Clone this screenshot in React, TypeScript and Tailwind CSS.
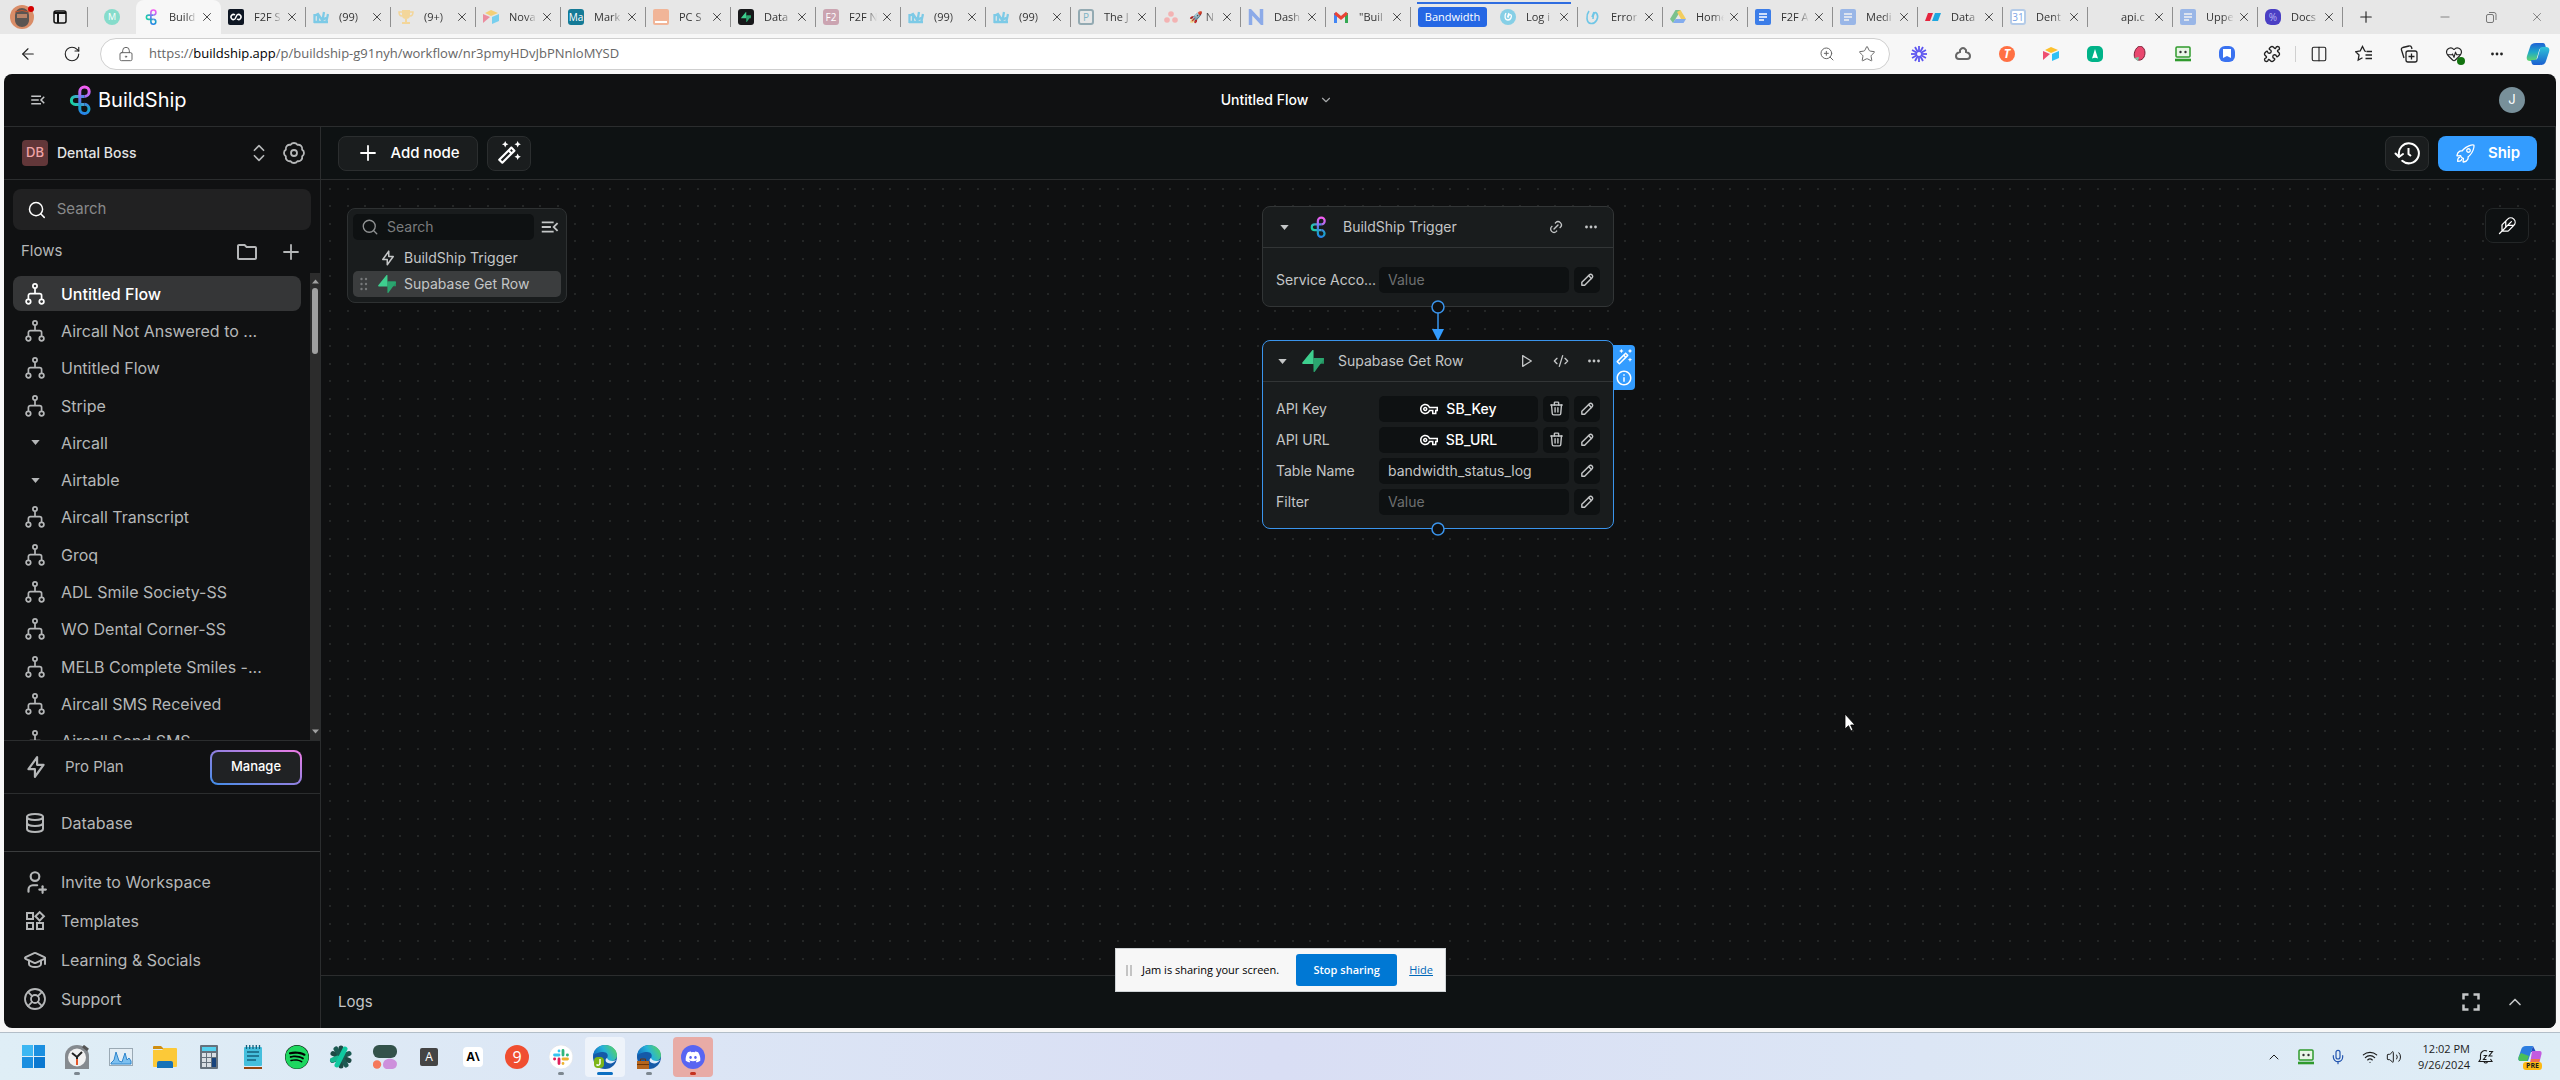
import type { ReactNode } from "react";
import {
  ArrowLeft,
  Badge,
  ChevronDown,
  ChevronsUpDown,
  ChevronUp,
  CodeXml,
  Columns2,
  GraduationCap,
  HeartPulse,
  LifeBuoy,
  LockKeyhole,
  Mic,
  Minus,
  Plus,
  Puzzle,
  RotateCw,
  Search,
  Star,
  Volume2,
  Wifi,
  X,
  ZoomIn,
} from "lucide-react";
import { FaDiscord, FaSpotify } from "react-icons/fa";
import { IoRocketOutline } from "react-icons/io5";
import {
  MdFullscreen,
  MdInfoOutline,
  MdMenuOpen,
  MdOutlineAutoFixHigh,
  MdOutlineFolder,
  MdOutlineVpnKey,
  MdOutlineWidgets,
} from "react-icons/md";
import { PiFeather } from "react-icons/pi";
import { TbBolt, TbDatabase, TbLink, TbPencil, TbPlayerPlay, TbTrash, TbUserPlus } from "react-icons/tb";

/* ---------- ICONS ---------- */

function BuildShipLogo({ className, id }: { className: string; id: string }) {
  return (
    <svg viewBox="0 0 22 30" fill="none" strokeWidth="3" className={className}>
      <defs>
        <linearGradient id={id} x1="17" y1="2" x2="11" y2="29" gradientUnits="userSpaceOnUse">
          <stop offset="0" stopColor="#f65cf0" />
          <stop offset="0.3" stopColor="#b06cf2" />
          <stop offset="0.55" stopColor="#4a7fe8" />
          <stop offset="0.75" stopColor="#18a7c4" />
          <stop offset="1" stopColor="#2a7df0" />
        </linearGradient>
        <linearGradient id={`${id}-g`} x1="14" y1="10" x2="2" y2="17" gradientUnits="userSpaceOnUse">
          <stop offset="0" stopColor="#5a86ee" />
          <stop offset="1" stopColor="#17d3a0" />
        </linearGradient>
      </defs>
      <path d="M15.5 11.4H6.4a4 4 0 0 0 0 8H15.5" stroke={`url(#${id}-g)`} />
      <path
        d="M10.8 24V6.6a4.7 4.7 0 1 1 4.7 4.8M15.5 19.3a4.6 4.6 0 1 1-4.7 4.7"
        stroke={`url(#${id})`}
      />
    </svg>
  );
}

function SupabaseLogo({ className }: { className: string }) {
  return (
    <svg viewBox="0 0 24 24" className={className}>
      <path d="M12.6 24V15H23.6c1 0 .6-1 .3-6.4h-10.7z" fill="#249361" />
      <path d="M12.6 23.4c0 .8.9 1 1.3.4L23.7 10.3c.6-.8.1-1.7-.8-1.7H12.6z" fill="#2ba56f" />
      <path d="M12.6 .6c0-.8-.9-1-1.4-.3L.4 13.5c-.6.8-.1 1.7.8 1.7H12.6z" fill="#3ecf8e" />
    </svg>
  );
}

function FlowIcon() {
  return (
    <svg viewBox="0 0 20 22" className="h-6 w-5" fill="none" stroke="currentColor" strokeWidth="1.7">
      <circle cx="10" cy="3" r="2.1" />
      <circle cx="3.4" cy="18.6" r="2.3" />
      <circle cx="16.6" cy="18.6" r="2.3" />
      <path d="M10 5.2v5.4M3.4 16.2v-3.6a2 2 0 0 1 2-2h9.200a2 2 0 0 1 2 2v3.6" />
    </svg>
  );
}

function Caret() {
  return (
    <svg viewBox="0 0 10 6" className="h-[5px] w-[9px]" fill="currentColor">
      <path d="M0 0h10L5 6z" />
    </svg>
  );
}

function Dots() {
  return (
    <svg viewBox="0 0 14 4" className="h-1 w-3.5" fill="currentColor">
      <circle cx="2.5" cy="2" r="1.4" />
      <circle cx="7" cy="2" r="1.4" />
      <circle cx="11.5" cy="2" r="1.4" />
    </svg>
  );
}

function HistoryIcon() {
  return (
    <svg viewBox="0 0 26 24" className="h-6 w-[26px]" fill="none" stroke="currentColor" strokeWidth="2">
      <path d="M5 14a10 10 0 1 1 3.2 5.8" strokeLinecap="round" />
      <path d="M1.5 12.5L5 16l4-3" strokeLinecap="round" />
      <path d="M14.5 7v6l2.5 2" />
    </svg>
  );
}

function Grip() {
  return (
    <svg viewBox="0 0 8 14" className="h-3.5 w-2 text-[#77797a]" fill="currentColor">
      {[2, 7, 12].map((y) => (
        <g key={y}>
          <circle cx="1.5" cy={y} r="1.2" />
          <circle cx="6" cy={y} r="1.2" />
        </g>
      ))}
    </svg>
  );
}

function Airtable() {
  return (
    <svg viewBox="0 0 16 16" className="size-4">
      <path d="M8 1l7 3-7 3-6-3z" fill="#fcc02e" />
      <path d="M9 8l7-3v7l-7 3z" fill="#2fc0f4" />
      <path d="M0 5l7 3-7 6z" fill="#ee5070" />
    </svg>
  );
}

function DocsIcon({ className = "" }: { className?: string }) {
  return (
    <svg viewBox="0 0 16 16" className={`size-4 ${className}`}>
      <rect width="16" height="16" rx="2" fill="#3c7de8" />
      <path d="M4 5h8M4 8h8M4 11h5" stroke="#fff" strokeWidth="1.5" />
    </svg>
  );
}

function Mews() {
  return (
    <svg viewBox="0 0 16 16" className="size-4 opacity-60">
      <path
        d="M1.5 14V5M5 14V5M9 14l2-11M13 14l2-9M1 7l4-2 4 6 6-3M1 13h14"
        stroke="#38b7e6"
        strokeWidth="2.3"
        fill="none"
      />
    </svg>
  );
}

function Swirl() {
  return (
    <svg viewBox="0 0 16 16" className="size-4" fill="none" stroke="#6fc6e6" strokeWidth="1.6">
      <path d="M4 2C1 6 1 14 6 14.500s8-6 6-9.500-4 0-4 5M9 3L7 8" />
    </svg>
  );
}

function RoboForm({ className }: { className: string }) {
  return (
    <svg viewBox="0 0 16 16" className={className}>
      <rect x="1" y="1" width="14" height="10" rx="1" fill="#e9f5e6" stroke="#2f9a2d" strokeWidth="1.5" />
      <circle cx="5.5" cy="6" r="1.2" fill="#333" />
      <circle cx="10.5" cy="6" r="1.2" fill="#333" />
      <path d="M0 14h16" stroke="#2f9a2d" strokeWidth="2.6" />
    </svg>
  );
}

function Copilot({ className, id }: { className: string; id: string }) {
  return (
    <svg viewBox="0 0 24 24" className={className}>
      <defs>
        <linearGradient id={`${id}-a`} x1="0" y1="0" x2="0" y2="1">
          <stop offset="0" stopColor="#1f62d6" />
          <stop offset="0.5" stopColor="#1da7c9" />
          <stop offset="1" stopColor="#63d66c" />
        </linearGradient>
        <linearGradient id={`${id}-b`} x1="0" y1="0" x2="0" y2="1">
          <stop offset="0" stopColor="#2fc3d8" />
          <stop offset="1" stopColor="#1a5fd0" />
        </linearGradient>
      </defs>
      <path
        d="M10 1h7c1.5 0 2 1 2.5 3l.5 2h-4c-2 0-2.6 1-3 2.500L10.6 17c-.5 1.4-1.3 2-3 2H4c-3 0-3.8-2-3-5L4 5c1-3 2.500-4 6-4z"
        fill={`url(#${id}-a)`}
      />
      <path
        d="M14 23H8c-1.5 0-2.2-1-2.6-3l-.4-2h3.5c2 0 2.8-1 3.2-2.5L14 7c.4-1.4 1.3-2 3-2h3c3 0 3.9 2 3 5l-3 9c-1 3-2.5 4-6 4z"
        fill={`url(#${id}-b)`}
      />
    </svg>
  );
}

function EdgeIcon({ badge, id }: { badge: ReactNode; id: string }) {
  return (
    <svg viewBox="0 0 24 24" className="size-6">
      <defs>
        <linearGradient id={id} x1="0" y1="0.6" x2="1" y2="0.2">
          <stop offset="0" stopColor="#0f6cc4" />
          <stop offset="0.5" stopColor="#27b3d8" />
          <stop offset="1" stopColor="#5ad55a" />
        </linearGradient>
      </defs>
      <circle cx="12" cy="12" r="12" fill="#155aa8" />
      <path
        d="M0 11C1 4 6 0 12 0c7 0 12 5 12 10 0 4-3 6-6 6-4 0-5-2-4-3 2-3 0-6-4-6S1 9 0 11z"
        fill={`url(#${id})`}
      />
      <path d="M14 13c1 3 6 4 9 2-2 3-5 4-8 3s-3-4-1-5z" fill="#dcebfb" />
      {badge}
    </svg>
  );
}

function LetterIcon({ text, className }: { text: string; className: string }) {
  return (
    <span className={`flex size-4 items-center justify-center rounded-[3px] text-[10px] leading-none ${className}`}>
      {text}
    </span>
  );
}

/* ---------- BROWSER CHROME ---------- */

type TabData = { title: string; icon: ReactNode; active?: boolean };

const tabs: TabData[] = [
  { title: "Build", icon: <BuildShipLogo id="tab" className="h-4 w-3" />, active: true },
  {
    title: "F2F S",
    icon: (
      <svg viewBox="0 0 16 16" className="size-4" fill="none" stroke="#fff" strokeWidth="1.500">
        <rect width="16" height="16" rx="2" fill="#0d1522" stroke="none" />
        <path d="M7 6a2.500 2.500 0 1 0 0 4M9 10a2.500 2.500 0 1 0 0-4L7 10" />
      </svg>
    ),
  },
  { title: "(99)", icon: <Mews /> },
  {
    title: "(9+)",
    icon: (
      <svg viewBox="0 0 16 16" className="size-4" fill="#f3d69a">
        <path d="M4 1h8v6c0 2-2 3-4 3S4 9 4 7zM7 10h2v3H7zM4 13h8v2H4z" />
        <path d="M4 3H1c0 3 1 4 3 4M12 3h3c0 3-1 4-3 4" fill="none" stroke="#f3d69a" strokeWidth="1.5" />
      </svg>
    ),
  },
  { title: "Nova", icon: <span className="opacity-60"><Airtable /></span> },
  { title: "Mark", icon: <LetterIcon text="Ma" className="bg-[#147a96] text-white" /> },
  {
    title: "PC S",
    icon: (
      <span className="flex size-4 items-end justify-center rounded-xs bg-[#f1b598] pb-[2px]">
        <span className="h-[2px] w-3 bg-white" />
      </span>
    ),
  },
  {
    title: "Data",
    icon: (
      <span className="flex size-4 items-center justify-center rounded-[3px] bg-[#17181a]">
        <SupabaseLogo className="size-2.5" />
      </span>
    ),
  },
  { title: "F2F N", icon: <LetterIcon text="F2" className="bg-[#cba4b1] text-white" /> },
  { title: "(99)", icon: <Mews /> },
  { title: "(99)", icon: <Mews /> },
  { title: "The J", icon: <LetterIcon text="P" className="border-2 border-[#93aab2] text-[#7fb4c4]" /> },
  {
    title: "🚀 N",
    icon: (
      <svg viewBox="0 0 16 16" className="size-4" fill="#f3b3b3">
        <circle cx="8" cy="5" r="2.800" />
        <circle cx="4" cy="11" r="2.800" />
        <circle cx="12" cy="11" r="2.800" />
      </svg>
    ),
  },
  {
    title: "Dash",
    icon: (
      <svg viewBox="0 0 16 16" className="size-4" fill="none" stroke="#8caae8" strokeWidth="3.5">
        <path d="M2.5 16V2l11 12V0" />
      </svg>
    ),
  },
  {
    title: "\"Buil",
    icon: (
      <svg viewBox="0 0 16 16" className="size-4" fill="none" strokeWidth="3">
        <path d="M2.5 14V4" stroke="#4285f4" />
        <path d="M13.5 14V4" stroke="#34a853" />
        <path d="M2 4l6 5 6-5" stroke="#ea4335" />
      </svg>
    ),
  },
];

const groupTab: TabData = {
  title: "Log i",
  icon: (
    <svg viewBox="0 0 16 16" className="size-4" fill="none" stroke="#fff" strokeWidth="1.300">
      <circle cx="8" cy="8" r="8" fill="#86cfe6" stroke="none" />
      <path d="M6 4c-2 3-1 7 2 7s4-4 3-5-3 0-3 3M9 4L7.500 8" />
    </svg>
  ),
};

const moreTabs: TabData[] = [
  { title: "Error", icon: <Swirl /> },
  {
    title: "Home",
    icon: (
      <svg viewBox="0 0 16 16" className="size-4 opacity-60">
        <path d="M5.5 1h5L8 6 3 14 0 10z" fill="#34a853" />
        <path d="M10.5 1L16 10h-5L7 3z" fill="#fbbc04" />
        <path d="M3 14l2.5-4H16l-2.5 4z" fill="#4285f4" />
      </svg>
    ),
  },
  { title: "F2F A", icon: <DocsIcon /> },
  { title: "Medi", icon: <DocsIcon className="opacity-45" /> },
  {
    title: "Data",
    icon: (
      <svg viewBox="0 0 16 16" className="size-4">
        <path d="M3 4h5L5 12H0z" fill="#e5263f" />
        <path d="M10 4h6l-3 8H7z" fill="#1ea7e0" />
      </svg>
    ),
  },
  { title: "Dent", icon: <LetterIcon text="31" className="border-2 border-[#b4cbe8] bg-white text-[#7ba4e6]" /> },
  { title: "api.c", icon: <span className="size-4" /> },
  { title: "Uppe", icon: <DocsIcon className="opacity-45" /> },
  { title: "Docs", icon: <LetterIcon text="%" className="rounded-md bg-[#4a3fc4] text-[#b9b4f5]" /> },
];

function BrowserTab({ tab }: { tab: TabData }) {
  return (
    <li
      className={`flex w-[85px] shrink-0 items-center pl-[7px] ${
        tab.active ? "h-full rounded-t-lg bg-[#f7f7f7]" : "h-5 border-r border-[#8f8f8f]"
      }`}
    >
      <span className="flex w-4 shrink-0 justify-center">{tab.icon}</span>
      <span className="ml-2.5 w-7 overflow-hidden text-[11px] whitespace-nowrap text-[#333] [mask-image:linear-gradient(to_right,#000_60%,transparent)]">
        {tab.title}
      </span>
      <button aria-label="Close tab" className="ml-0.5 flex size-4 items-center justify-center text-[#333]">
        <X className="size-3.5" strokeWidth={1.5} />
      </button>
    </li>
  );
}

function TabStrip() {
  return (
    <div className="flex h-[34px] items-center bg-[#e7e7e7]">
      <div className="flex w-[136px] items-center">
        <svg viewBox="0 0 24 24" className="ml-2.5 size-6">
          <circle cx="12" cy="12" r="12" fill="#d98d68" />
          <path d="M5 10a7 7 0 0 1 14 0v5c0 4-3 7-7 7s-7-3-7-7z" fill="#5b5552" />
          <path d="M7 9h10v4H7z" fill="#b98368" />
          <path d="M5 7q7-3 14 0" stroke="#c4552f" fill="none" />
          <circle cx="21" cy="4" r="3" fill="#d40000" />
        </svg>
        <svg viewBox="0 0 14 14" className="ml-[19px] size-3.5" fill="none" stroke="#111" strokeWidth="1.5">
          <rect x="1" y="1" width="12" height="12" rx="2" />
          <path d="M1 3h12M5 3v10" strokeWidth="2" />
        </svg>
        <span className="ml-5 h-5 w-px bg-[#999]" />
        <span className="ml-4 flex size-4 items-center justify-center rounded-full bg-[#86dccb] text-[9px] text-white">
          M
        </span>
      </div>
      <ul className="flex h-full items-center">
        {tabs.map((tab, i) => (
          <BrowserTab key={i} tab={tab} />
        ))}
        <li className="flex h-full flex-col">
          <span className="mt-0.5 ml-1.5 h-0.5 w-[154px] bg-[#2f6de0]" />
          <div className="mt-[3px] flex items-center">
            <span className="mr-1.5 ml-[7px] flex h-5 w-[69px] items-center justify-center rounded-[3px] bg-[#2567e4] text-[11px] text-white">
              Bandwidth
            </span>
            <ul>
              <BrowserTab tab={groupTab} />
            </ul>
          </div>
        </li>
        {moreTabs.map((tab, i) => (
          <BrowserTab key={i} tab={tab} />
        ))}
      </ul>
      <button aria-label="New tab" className="ml-3.5 text-[#222]">
        <Plus className="size-[18px]" strokeWidth={1.5} />
      </button>
      <div className="mr-4 ml-auto flex gap-8 text-[#777]">
        <button aria-label="Minimize">
          <Minus className="size-3.5" strokeWidth={1.5} />
        </button>
        <button aria-label="Restore">
          <svg viewBox="0 0 14 14" className="size-3.5" fill="none" stroke="currentColor">
            <rect x="2.5" y="4.5" width="7" height="8" rx="1.5" />
            <path d="M5 2.5h5a2 2 0 0 1 2 2V10" />
          </svg>
        </button>
        <button aria-label="Close window">
          <X className="size-3.5" strokeWidth={1.5} />
        </button>
      </div>
    </div>
  );
}

const extensions: { name: string; icon: ReactNode }[] = [
  {
    name: "Loom",
    icon: (
      <svg viewBox="0 0 16 16" className="size-4" stroke="#5d55f0" strokeWidth="1.8">
        {[0, 30, 60, 90, 120, 150].map((a) => (
          <path key={a} d="M8 0v16" transform={`rotate(${a} 8 8)`} />
        ))}
        <circle cx="8" cy="8" r="2" fill="#f7f7f7" stroke="none" />
      </svg>
    ),
  },
  {
    name: "Drive",
    icon: (
      <svg viewBox="0 0 16 16" className="size-4" fill="none" stroke="#666" strokeWidth="2">
        <path d="M5 4q3-4 6 0v2q4 1 4 4t-3 3H4q-3 0-3-3t4-4z" />
      </svg>
    ),
  },
  {
    name: "Text Blaze",
    icon: (
      <span className="flex size-4 items-center justify-center rounded-full bg-[#ff7043] text-xs font-bold text-white italic">
        T
      </span>
    ),
  },
  { name: "Airtable", icon: <Airtable /> },
  {
    name: "Aircall",
    icon: (
      <svg viewBox="0 0 16 16" className="size-4">
        <rect width="16" height="16" rx="5" fill="#00b388" />
        <path d="M8 3l3 9.5c-2-1-4-1-6 0z" fill="#fff" />
      </svg>
    ),
  },
  {
    name: "Jam",
    icon: (
      <svg viewBox="0 0 16 16" className="size-4">
        <path d="M9 0c5 1 6 7 4 11s-7 4-9 1S4 1 9 0z" fill="#e9486f" stroke="#7a2339" />
        <path d="M3 12l5-1-1 4z" fill="#7cc6a4" />
      </svg>
    ),
  },
  { name: "RoboForm", icon: <RoboForm className="size-4" /> },
  {
    name: "Dialer",
    icon: (
      <svg viewBox="0 0 16 16" className="size-4">
        <rect width="16" height="16" rx="6" fill="#3a72f0" />
        <path d="M4 3h8v9l-4-2-4 2z" fill="#fff" />
      </svg>
    ),
  },
  {
    name: "Extensions",
    icon: <Puzzle className="size-[18px]" strokeWidth={1.8} />,
  },
];

function AddressBar() {
  return (
    <div className="flex h-10 items-center bg-[#f7f7f7] text-[#222]">
      <button aria-label="Back" className="ml-[19px]">
        <ArrowLeft className="size-[18px]" strokeWidth={1.5} />
      </button>
      <button aria-label="Refresh" className="ml-[26px]">
        <RotateCw className="size-[18px]" strokeWidth={1.5} />
      </button>
      <div className="ml-[19px] flex h-8 flex-1 items-center rounded-full border border-[#cfcfcf] bg-white pr-[13px] pl-[17px] text-[#666]">
        <LockKeyhole className="size-4" strokeWidth={1.5} />
        <p className="ml-[15px] flex-1 text-[13px]">
          https://<span className="text-black">buildship.app</span>/p/buildship-g91nyh/workflow/nr3pmyHDvJbPNnloMYSD
        </p>
        <ZoomIn className="size-4" strokeWidth={1.5} />
        <Star className="ml-[23px] size-[18px]" strokeWidth={1.3} />
      </div>
      <div className="ml-[21px] flex items-center gap-7">
        {extensions.map((e) => (
          <button key={e.name} aria-label={e.name}>
            {e.icon}
          </button>
        ))}
      </div>
      <span className="ml-3.5 h-4 w-px bg-[#d0d0d0]" />
      <div className="ml-3.5 flex items-center gap-[27px]">
        <Columns2 className="size-[18px]" strokeWidth={1.5} />
        <svg viewBox="0 0 18 18" className="size-[18px]" fill="none" stroke="currentColor" strokeWidth="1.3">
          <path d="M11 6.5L9.8 6 7.5 1.5 5.2 6l-4.5.7L4 10l-.8 5 4.3-2.3M11.5 6.5H17M10.5 10H17M10.5 13.5H17" />
        </svg>
        <svg viewBox="0 0 18 18" className="size-[18px]" fill="none" stroke="currentColor" strokeWidth="1.3">
          <rect x="6" y="6" width="11" height="11" rx="2" />
          <path d="M11.5 8.5v6M8.5 11.5h6M4 13L1.5 5a2 2 0 0 1 1.3-2.5L9 1a2 2 0 0 1 2.5 1.3L12 4" />
        </svg>
        <span className="relative">
          <HeartPulse className="size-[18px]" strokeWidth={1.5} />
          <span className="absolute -right-0.5 -bottom-0.5 size-2 rounded-full bg-[#12730f]" />
        </span>
        <Dots />
      </div>
      <Copilot id="cp" className="mr-2.5 ml-[22px] size-6" />
    </div>
  );
}

/* ---------- SIDEBAR ---------- */

const flows = [
  { name: "Untitled Flow", active: true },
  { name: "Aircall Not Answered to ..." },
  { name: "Untitled Flow" },
  { name: "Stripe" },
  { name: "Aircall", folder: true },
  { name: "Airtable", folder: true },
  { name: "Aircall Transcript" },
  { name: "Groq" },
  { name: "ADL Smile Society-SS" },
  { name: "WO Dental Corner-SS" },
  { name: "MELB Complete Smiles -..." },
  { name: "Aircall SMS Received" },
  { name: "Aircall Send SMS" },
];

const links = [
  { name: "Invite to Workspace", icon: <TbUserPlus className="size-[26px]" /> },
  { name: "Templates", icon: <MdOutlineWidgets className="size-6" /> },
  { name: "Learning & Socials", icon: <GraduationCap className="size-6" /> },
  { name: "Support", icon: <LifeBuoy className="size-6" strokeWidth={1.8} /> },
];

function Sidebar() {
  return (
    <aside className="flex w-[317px] shrink-0 flex-col border-r border-[#2b2d2e] text-base text-[#b5b7b8]">
      <div className="flex h-[53px] shrink-0 items-center border-b border-[#2b2d2e] pr-3.5 pl-[18px]">
        <span className="flex size-[26px] items-center justify-center rounded-sm bg-[#623739] text-[13px] font-medium text-[#f1a5a8]">
          DB
        </span>
        <span className="ml-[9px] flex-1 text-sm font-medium text-[#e3e4e4]">Dental Boss</span>
        <button aria-label="Switch workspace">
          <ChevronsUpDown className="size-[22px]" strokeWidth={1.8} />
        </button>
        <button aria-label="Settings" className="ml-3">
          <Badge className="size-6" strokeWidth={1.8}>
            <circle cx="12" cy="12" r="3" />
          </Badge>
        </button>
      </div>

      <label className="mx-[9px] mt-[9px] flex h-[41px] shrink-0 items-center rounded-lg bg-[#212122] pl-3.5">
        <Search className="size-[22px] text-white" strokeWidth={1.8} />
        <input
          aria-label="Search flows"
          placeholder="Search"
          className="ml-2.5 w-full bg-transparent text-[15px] outline-none placeholder:text-[#88898a]"
        />
      </label>

      <div className="flex h-[43px] shrink-0 items-center pr-[17px] pl-[17px]">
        <h2 className="flex-1 text-[15px]">Flows</h2>
        <button aria-label="New folder">
          <MdOutlineFolder className="size-6" />
        </button>
        <button aria-label="New flow" className="ml-5">
          <Plus className="size-6" strokeWidth={1.8} />
        </button>
      </div>

      <div className="flex h-[468px] shrink-0 overflow-hidden border-b border-[#2b2d2e]">
        <ul className="mt-0.5 grid h-[485px] flex-1 auto-rows-fr pr-[9px] pl-[9px]">
          {flows.map((f, i) => (
            <li key={i} className="py-px">
              <a
                href="#"
                className={`flex h-full items-center rounded-lg pl-3 ${
                  f.active ? "bg-[#353637] font-medium text-white" : ""
                }`}
              >
                <span className="flex w-5 justify-center">{f.folder ? <Caret /> : <FlowIcon />}</span>
                <span className="ml-4">{f.name}</span>
              </a>
            </li>
          ))}
        </ul>
        <div className="flex w-2.5 flex-col items-center bg-[#2c2c2c] py-1.5 text-[#a0a0a0]">
          <span className="rotate-180">
            <svg viewBox="0 0 10 6" className="h-[5px] w-[7px]" fill="currentColor">
              <path d="M0 0h10L5 6z" />
            </svg>
          </span>
          <span className="mt-1 h-[66px] w-1.5 rounded-full bg-[#a0a0a0]" />
          <svg viewBox="0 0 10 6" className="mt-auto h-[5px] w-[7px]" fill="currentColor">
            <path d="M0 0h10L5 6z" />
          </svg>
        </div>
      </div>

      <div className="flex h-[53px] shrink-0 items-center border-b border-[#2b2d2e] pr-[18px] pl-[19px]">
        <TbBolt className="size-[26px]" />
        <span className="ml-4 flex-1 text-[15px]">Pro Plan</span>
        <button className="rounded-lg bg-linear-to-tr from-[#3a8de8] via-[#8f80e0] to-[#f07ae6] p-0.5">
          <span className="flex h-[31px] w-22 items-center justify-center rounded-md bg-[#202224] text-[13px] font-medium text-white">
            Manage
          </span>
        </button>
      </div>

      <a href="#" className="flex h-[58px] shrink-0 items-center border-b border-[#3a3c3d] pl-[19px]">
        <TbDatabase className="size-6" />
        <span className="ml-3.5">Database</span>
      </a>

      <nav className="mt-2.5 flex flex-col">
        {links.map((l) => (
          <a key={l.name} href="#" className="flex h-[39px] items-center pl-[18px]">
            <span className="flex w-[26px] justify-center">{l.icon}</span>
            <span className="ml-[13px]">{l.name}</span>
          </a>
        ))}
      </nav>
    </aside>
  );
}

/* ---------- CANVAS ---------- */

function SquareButton({ label, children }: { label: string; children: ReactNode }) {
  return (
    <button
      aria-label={label}
      className="flex size-[26px] shrink-0 items-center justify-center rounded-[5px] bg-[#0e1112] text-[#c4c6c7]"
    >
      {children}
    </button>
  );
}

function Field({ label, value, secret }: { label: string; value?: string; secret?: boolean }) {
  const id = label.toLowerCase().replace(/\W+/g, "-");
  return (
    <div className="flex h-[31px] items-center gap-[5px]">
      <label htmlFor={id} className="w-[98px] shrink-0 whitespace-nowrap">
        {label}
      </label>
      {secret ? (
        <>
          <button
            id={id}
            className="flex h-[26px] flex-1 items-center justify-center gap-2 rounded-[5px] bg-[#0e1112] font-medium text-white"
          >
            <MdOutlineVpnKey className="size-[18px]" />
            {value}
          </button>
          <SquareButton label={`Remove ${label}`}>
            <TbTrash className="size-[17px]" />
          </SquareButton>
        </>
      ) : (
        <input
          id={id}
          defaultValue={value}
          placeholder="Value"
          className="h-[26px] w-full min-w-0 rounded-[5px] bg-[#0e1112] px-[9px] outline-none placeholder:text-[#6d6f70]"
        />
      )}
      <SquareButton label={`Edit ${label}`}>
        <TbPencil className="size-[17px]" />
      </SquareButton>
    </div>
  );
}

function OutlinePanel() {
  return (
    <div className="absolute top-7 left-[26px] w-[220px] rounded-lg border border-[#2e3132] bg-[#191c1d] p-[5px] text-sm text-[#c4c6c7]">
      <div className="flex items-center">
        <label className="flex h-[26px] w-[182px] items-center rounded-[5px] bg-[#0e1112] pl-2">
          <Search className="size-[18px] text-[#8f9192]" strokeWidth={1.8} />
          <input
            aria-label="Search nodes"
            placeholder="Search"
            className="ml-2 w-28 bg-transparent outline-none placeholder:text-[#7a7c7d]"
          />
        </label>
        <button aria-label="Collapse outline" className="ml-[5px]">
          <MdMenuOpen className="size-[22px]" />
        </button>
      </div>
      <ul className="mt-[5px]">
        <li className="flex h-[26px] items-center pl-[26px]">
          <TbBolt className="size-[18px]" />
          <span className="ml-[7px]">BuildShip Trigger</span>
        </li>
        <li className="flex h-[26px] items-center rounded-[5px] bg-[#3b3d3e] pl-[7px]">
          <Grip />
          <SupabaseLogo className="ml-2.5 size-[18px]" />
          <span className="ml-2">Supabase Get Row</span>
        </li>
      </ul>
    </div>
  );
}

function TriggerNode() {
  return (
    <article className="absolute top-[26px] left-[941px] w-[352px] rounded-lg border border-[#323536] bg-[#191c1d] text-sm text-[#c4c6c7]">
      <header className="flex h-[41px] items-center border-b border-[#323536] pr-[15px] pl-[17px]">
        <Caret />
        <BuildShipLogo id="node" className="ml-[21px] h-[22px] w-4" />
        <h3 className="ml-[17px] flex-1">BuildShip Trigger</h3>
        <button aria-label="Copy link">
          <TbLink className="size-4" />
        </button>
        <button aria-label="More" className="ml-5">
          <Dots />
        </button>
      </header>
      <div className="px-[13px] pt-4 pb-[11px]">
        <Field label="Service Acco..." />
      </div>
    </article>
  );
}

function SupabaseNode() {
  return (
    <article className="absolute top-[160px] left-[941px] w-[352px] rounded-lg border border-[#3a94ec] bg-[#191c1d] text-sm text-[#c4c6c7]">
      <header className="flex h-[41px] items-center border-b border-[#323536] pr-3 pl-[15px]">
        <Caret />
        <SupabaseLogo className="ml-[15px] size-[22px]" />
        <h3 className="ml-3.5 flex-1">Supabase Get Row</h3>
        <button aria-label="Run">
          <TbPlayerPlay className="size-4" />
        </button>
        <button aria-label="Code" className="ml-[19px]">
          <CodeXml className="size-4" />
        </button>
        <button aria-label="More" className="ml-[18px]">
          <Dots />
        </button>
      </header>
      <div className="px-[13px] py-[11px]">
        <Field label="API Key" value="SB_Key" secret />
        <Field label="API URL" value="SB_URL" secret />
        <Field label="Table Name" value="bandwidth_status_log" />
        <Field label="Filter" />
      </div>
      <div className="absolute top-1 left-[350px] flex w-[22px] flex-col items-center gap-[3px] rounded-r-sm bg-[#339cff] py-[3px] text-white">
        <button aria-label="Generate with AI">
          <MdOutlineAutoFixHigh className="size-[18px]" />
        </button>
        <button aria-label="Node info">
          <MdInfoOutline className="size-[18px]" />
        </button>
      </div>
    </article>
  );
}

function Canvas() {
  return (
    <div className="relative flex-1 overflow-hidden bg-[#0f1011]">
      <svg className="absolute inset-0 size-full">
        <defs>
          <pattern id="grid" width="35" height="35" patternUnits="userSpaceOnUse">
            <g fill="#2a2d2d">
              <circle cx="9" cy="9" r="1" />
              <circle cx="27" cy="9" r="1" />
              <circle cx="9" cy="26" r="1" />
              <circle cx="27" cy="26" r="1" />
            </g>
          </pattern>
        </defs>
        <rect width="100%" height="100%" fill="url(#grid)" />
      </svg>
      <OutlinePanel />
      <TriggerNode />
      <SupabaseNode />
      <svg viewBox="0 0 20 240" className="absolute top-[117px] left-[1107px] h-[240px] w-5">
        <path d="M10 15v20" stroke="#3a94ec" strokeWidth="1.5" />
        <path d="M4 32h12l-6 12z" fill="#339cff" />
        <circle cx="10" cy="10" r="6" fill="#0f1011" stroke="#3a94ec" strokeWidth="1.5" />
        <circle cx="10" cy="232" r="6" fill="#0f1011" stroke="#3a94ec" strokeWidth="1.5" />
      </svg>
      <button
        aria-label="Notes"
        className="absolute top-7 right-[26px] flex h-[35px] w-11 items-center justify-center rounded-lg border border-[#232627] bg-[#0e1112] text-white"
      >
        <PiFeather className="size-5" />
      </button>
      <svg viewBox="0 0 12 19" className="absolute top-[533px] left-[1523px] h-[19px] w-3">
        <path d="M1 1v15l3.5-3.300L7 18l2-1-2.300-5H11z" fill="#fff" stroke="#000" strokeWidth="0.8" />
      </svg>
    </div>
  );
}

function Workspace() {
  return (
    <main className="flex min-w-0 flex-1 flex-col border-r border-[#2b2d2e]">
      <div className="flex h-[53px] shrink-0 items-center border-b border-[#2b2d2e] bg-[#0e1213] pr-[18px] pl-[17px]">
        <button className="flex h-[35px] w-[140px] items-center justify-center gap-2.5 rounded-lg border border-[#2b2e2f] bg-[#1a1d1e] text-[15px] font-medium text-white">
          <Plus className="size-6" strokeWidth={1.8} />
          Add node
        </button>
        <button
          aria-label="Generate with AI"
          className="ml-[9px] flex h-[35px] w-11 items-center justify-center rounded-lg border border-[#2b2e2f] bg-[#1a1d1e] text-white"
        >
          <MdOutlineAutoFixHigh className="size-[26px]" />
        </button>
        <button
          aria-label="Version history"
          className="mr-[9px] ml-auto flex h-[35px] w-11 items-center justify-center rounded-lg border border-[#2b2e2f] bg-[#1a1d1e] text-white"
        >
          <HistoryIcon />
        </button>
        <button className="flex h-[35px] w-[99px] items-center justify-center gap-3 rounded-lg bg-[#339cff] text-[15px] font-semibold text-white">
          <IoRocketOutline className="size-[21px]" />
          Ship
        </button>
      </div>
      <Canvas />
      <footer className="flex h-[53px] shrink-0 items-center border-t border-[#2b2d2e] bg-[#0e1213] pr-[30px] pl-[17px] text-[15px] text-[#c4c6c7]">
        <span className="flex-1">Logs</span>
        <button aria-label="Full screen">
          <MdFullscreen className="size-[30px]" />
        </button>
        <button aria-label="Expand logs" className="ml-[19px]">
          <ChevronUp className="size-5" />
        </button>
      </footer>
    </main>
  );
}

/* ---------- DESKTOP ---------- */

function ShareBar() {
  return (
    <div className="absolute top-[948px] left-[1115px] flex h-11 w-[331px] items-center border border-[#cfd3d6] bg-[#f7f7f7] pr-3 pl-2.5 font-['Open_Sans','Noto_Sans',sans-serif] text-[11px] text-black">
      <span className="flex gap-0.5">
        <span className="h-[11px] w-0.5 bg-[#c4c4c4]" />
        <span className="h-[11px] w-0.5 bg-[#c4c4c4]" />
      </span>
      <span className="ml-2.5 whitespace-nowrap">Jam is sharing your screen.</span>
      <button className="ml-auto h-8 w-[101px] rounded-[3px] bg-[#0078d4] font-semibold text-white">Stop sharing</button>
      <a href="#" className="ml-3 text-[#0067b8] underline">
        Hide
      </a>
    </div>
  );
}

const apps: { name: string; icon: ReactNode; mark?: string; tile?: string }[] = [
  {
    name: "Start",
    icon: (
      <svg viewBox="0 0 23 23" className="size-[23px]" fill="#1b8fe0">
        <path d="M0 0h11v11H0z" fill="#3db7f2" />
        <path d="M12 0h11v11H12zM0 12h11v11H0z" />
        <path d="M12 12h11v11H12z" fill="#0b78d0" />
      </svg>
    ),
  },
  {
    name: "Clock",
    icon: (
      <svg viewBox="0 0 24 24" className="size-6">
        <path d="M0 24V11a12 11 0 0 1 24 0v13z" fill="#858a8f" />
        <path d="M18 1l5 4" stroke="#555" strokeWidth="3" />
        <circle cx="12" cy="12.5" r="9" fill="#f1f1f1" />
        <path d="M7 8l5 4 5-5M12 12v4" stroke="#222" strokeWidth="2" fill="none" />
        <path d="M12 14v6" stroke="#e4572a" strokeWidth="2" />
      </svg>
    ),
    mark: "w-1.5 bg-[#7d8790]",
  },
  {
    name: "Resource Monitor",
    icon: (
      <svg viewBox="0 0 24 18" className="h-[18px] w-6">
        <rect x=".5" y=".5" width="23" height="17" fill="#e4eef5" stroke="#9aa9b4" />
        <path d="M2 15l3-3 2-8 3 9 3 1 3-9 2 7 2-2 2 3v3H2z" fill="#7dc0f0" stroke="#2f86cc" />
      </svg>
    ),
  },
  {
    name: "File Explorer",
    icon: (
      <svg viewBox="0 0 24 22" className="h-[22px] w-6">
        <path d="M0 1q0-1 1-1h7l3 3H0z" fill="#d08e10" />
        <path d="M0 4h9l2-2h12q1 0 1 1v17q0 1-1 1H1q-1 0-1-1z" fill="#fcc938" />
        <path d="M4 22v-5q0-2 2-2h12q2 0 2 2v5z" fill="#1572b8" />
      </svg>
    ),
  },
  {
    name: "Calculator",
    icon: (
      <svg viewBox="0 0 18 24" className="h-6 w-[18px]">
        <rect width="18" height="24" rx="1" fill="#65717c" />
        <path d="M2 2h14v4H2z" fill="#54d0ee" />
        <path d="M2 8h4v4H2zM7 8h4v4H7zM12 8h4v4h-4zM2 13h4v4H2zM7 13h4v4H7zM2 18h4v4H2zM7 18h4v4H7z" fill="#d8dee3" />
        <path d="M12 13h4v9h-4z" fill="#17437c" />
      </svg>
    ),
  },
  {
    name: "Notepad",
    icon: (
      <svg viewBox="0 0 18 24" className="h-6 w-[18px]">
        <rect y="2" width="18" height="19" rx="1" fill="#45bfdd" />
        <path
          d="M2.5 0v4M5.700 0v4M9 0v4M12.3 0v4M15.5 0v4M3 7h12M3 11h12M3 15h9"
          stroke="#14607c"
          strokeWidth="1.3"
        />
        <path d="M0 23h18" stroke="#95450f" strokeWidth="2" />
      </svg>
    ),
  },
  {
    name: "Spotify",
    icon: (
      <span className="flex rounded-full bg-black text-[#1ed760]">
        <FaSpotify className="size-6" />
      </span>
    ),
  },
  {
    name: "Grammarly",
    icon: (
      <svg viewBox="0 0 24 24" className="size-6" strokeWidth="5" strokeLinecap="round">
        <path d="M4 8.500l16 7M12 3v18" stroke="#1e4a45" />
        <path d="M3.500 15.500L20 8.500M7 4l10 16" stroke="#1c5a52" />
        <path d="M3.500 15l5-2" stroke="#17b890" />
        <path d="M16 4L8 20" stroke="#10c9a0" />
      </svg>
    ),
  },
  {
    name: "Descript",
    icon: (
      <svg viewBox="0 0 24 24" className="size-6">
        <rect width="24" height="13" rx="6" fill="#33524a" />
        <circle cx="4" cy="19.5" r="4.2" fill="#f4785b" />
        <path d="M10 20c0-5 4-7 9-6s6 5 4 8-13 4-13-2z" fill="#cd90dc" />
      </svg>
    ),
  },
  {
    name: "Aqua",
    icon: <span className="flex size-[18px] items-center justify-center rounded-xs bg-[#444] text-xs text-white">A</span>,
  },
  {
    name: "Claude",
    icon: (
      <span className="flex size-5 items-center justify-center rounded-sm bg-white text-xs font-bold text-black">
        A\
      </span>
    ),
  },
  {
    name: "Nine",
    icon: <span className="flex size-6 items-center justify-center rounded-full bg-[#f04e30] text-base text-white">9</span>,
  },
  {
    name: "Slack",
    icon: (
      <svg viewBox="0 0 24 24" className="size-6" strokeWidth="2.8" strokeLinecap="round">
        <circle cx="12" cy="12" r="12" fill="#fff" stroke="#d6dbe0" strokeWidth="0.5" />
        <path d="M10 6v.1M5.5 10H10" stroke="#36c5f0" />
        <path d="M14 5.5V10M18.500 10h-.2" stroke="#2eb67d" />
        <path d="M14 14h4.500M14 18.500v-.2" stroke="#ecb22e" />
        <path d="M10 14v4.500M5.500 14h.2" stroke="#e01e5a" />
      </svg>
    ),
    mark: "w-1.5 bg-[#7d8790]",
  },
  {
    name: "Edge",
    icon: (
      <EdgeIcon
        id="edge-a"
        badge={
          <>
            <rect x="1" y="12" width="10" height="11" rx="4" fill="#7cb518" />
            <path d="M7 14v4.5a2 2 0 0 1-3.5 1" stroke="#fff" strokeWidth="1.5" fill="none" />
          </>
        }
      />
    ),
    mark: "w-4 bg-[#0b6fc2]",
    tile: "bg-white/50",
  },
  {
    name: "Edge work profile",
    icon: (
      <EdgeIcon
        id="edge-b"
        badge={
          <>
            <path d="M0 16h12v8H0z" fill="#b5651d" />
            <path d="M3.5 16v-2h5v2M0 19.5h12" stroke="#6d3508" fill="none" />
          </>
        }
      />
    ),
    mark: "w-1.5 bg-[#7d8790]",
  },
  {
    name: "Discord",
    icon: (
      <span className="flex size-6 items-center justify-center rounded-full bg-[#5865f2] text-white">
        <FaDiscord className="size-4" />
      </span>
    ),
    mark: "w-1.5 bg-[#c4321f]",
    tile: "bg-[#e8aba6]",
  },
];

function Taskbar() {
  return (
    <div className="flex h-12 shrink-0 items-center border-t border-[#b3bec8] bg-linear-to-r from-[#dfeef6] via-[#d9def4] to-[#dfeef6] pr-[18px] pl-[13px] text-[#1c1c1c]">
      <div className="flex gap-1">
        {apps.map((app) => (
          <button
            key={app.name}
            aria-label={app.name}
            className={`relative flex size-10 items-center justify-center rounded-sm ${app.tile ?? ""}`}
          >
            {app.icon}
            {app.mark && <span className={`absolute bottom-0.5 h-[3px] rounded-full ${app.mark}`} />}
          </button>
        ))}
      </div>
      <div className="ml-auto flex items-center">
        <ChevronUp className="size-4" strokeWidth={1.5} />
        <RoboForm className="ml-4 size-4" />
        <Mic className="ml-4 size-4 text-[#2456b0]" strokeWidth={1.8} />
        <Wifi className="ml-4 size-4" strokeWidth={1.8} />
        <Volume2 className="ml-2 size-4" strokeWidth={1.5} />
        <div className="ml-4 text-right text-[11px] leading-4">
          <p>12:02 PM</p>
          <p>9/26/2024</p>
        </div>
        <svg viewBox="0 0 16 16" className="ml-2 size-4" fill="none" stroke="currentColor" strokeWidth="1.1">
          <path d="M9 2a4.500 4.500 0 0 0-6.500 4v4L1 12.500h13L12.500 10M6 13a2 2 0 0 0 3.500 0" />
          <path d="M5.500 6.500h3l-3 4h3M11 2.500h3.500L11 7h3.500" />
        </svg>
        <span className="relative ml-6 flex">
          <svg viewBox="0 0 24 24" className="size-6">
            <path d="M8 1h7l-5 15H3c-3 0-3-2-2-5l2-6c1-3 2-4 5-4z" fill="#2b7de0" />
            <path d="M3 8l8 3-2 5H3c-3 0-3-2-2-5z" fill="#4bbf5a" />
            <path d="M15 1l3 6h-5z" fill="#1f4fc0" />
            <path d="M14 6h7c3 0 3 2 2 5l-2 8h-9z" fill="#c25be0" />
            <path d="M13 14h9l-2 6h-8z" fill="#f0704e" />
          </svg>
          <span className="absolute -bottom-px left-[5px] rounded-[3px] bg-[#fdb913] px-[3px] text-[7px] leading-[8px] font-bold">
            PRE
          </span>
        </span>
      </div>
    </div>
  );
}

export default function App() {
  return (
    <div className="relative flex h-screen flex-col overflow-hidden bg-[#f7f7f7] font-['Open_Sans','Noto_Sans',sans-serif]">
      <TabStrip />
      <AddressBar />
      <div className="mx-1 mb-1 flex min-h-0 flex-1 flex-col overflow-hidden rounded-lg bg-[#101112] font-[Inter,sans-serif]">
        <header className="flex h-[53px] shrink-0 items-center border-b border-[#2b2d2e] pr-[31px] pl-[25px] text-[#c4c6c7]">
          <div className="flex flex-1 items-center">
            <button aria-label="Collapse sidebar">
              <MdMenuOpen className="size-[18px]" />
            </button>
            <BuildShipLogo id="brand" className="ml-[22px] h-[30px] w-[22px]" />
            <span className="ml-[7px] text-xl text-white">BuildShip</span>
          </div>
          <button className="flex items-center gap-[11px] text-sm font-medium text-white">
            Untitled Flow
            <ChevronDown className="size-3.5 text-[#a5a7a8]" />
          </button>
          <div className="flex flex-1 justify-end">
            <span className="flex size-[26px] items-center justify-center rounded-full bg-[#78909a] text-[13px] text-white">
              J
            </span>
          </div>
        </header>
        <div className="flex min-h-0 flex-1">
          <Sidebar />
          <Workspace />
        </div>
      </div>
      <Taskbar />
      <ShareBar />
    </div>
  );
}
